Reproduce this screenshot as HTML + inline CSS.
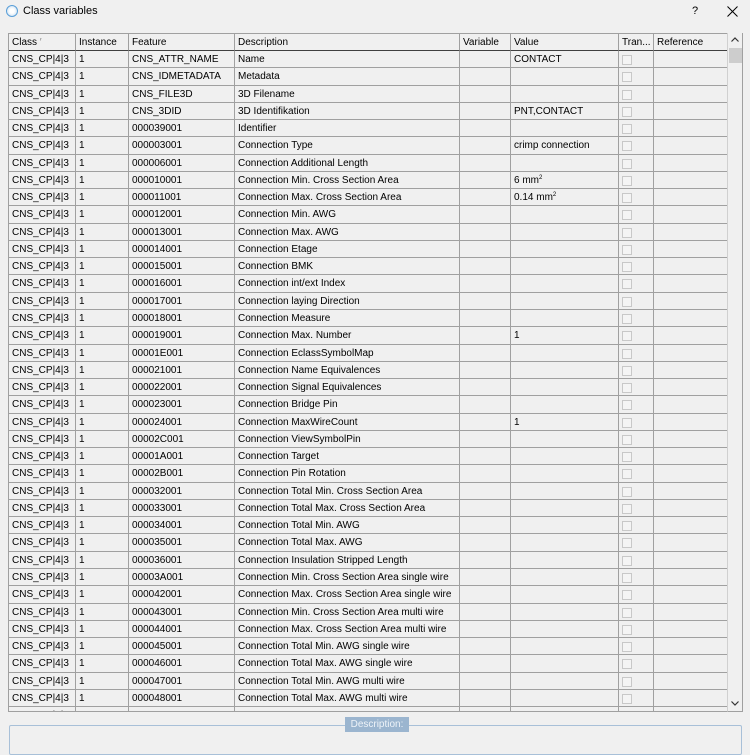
<!DOCTYPE html>
<html><head><meta charset="utf-8"><style>
*{box-sizing:border-box;margin:0;padding:0}
body{width:750px;height:743px;background:#f0f0f0;font-family:"Liberation Sans",sans-serif;font-size:10px;color:#000;position:relative;overflow:hidden}
.title{position:absolute;left:23px;top:5px;font-size:11px}
.ico{position:absolute;left:6px;top:5px;width:12px;height:12px;border-radius:50%;border:1.5px solid #5a9fd8;background:radial-gradient(circle,#fff 30%,#dbe9f5 70%)}
.q{position:absolute;left:692px;top:5px;font-size:11px}
.x{position:absolute;left:727px;top:6px}
.tbl{position:absolute;left:8px;top:33px;width:735px;height:679px;border:1px solid #a0a0a0;border-right:none;overflow:hidden}
.r{display:grid;grid-template-columns:67px 53px 106px 225px 51px 108px 35px 74px;height:17.27px}
.r>div{border-right:1px solid #a0a0a0;border-bottom:1px solid #a0a0a0;padding-left:3px;line-height:18px;white-space:nowrap;overflow:hidden}
.h{height:17px}
.h>div{border-bottom:1px solid #404040;line-height:17px}
.cb{display:inline-block;width:10px;height:10px;border:1px solid #c8c8c8;margin-top:4px;background:#f4f4f4;vertical-align:top}
.sb{position:absolute;left:727px;top:33px;width:16px;height:679px;border-left:1px solid #d0d0d0;background:#f0f0f0;border-right:1px solid #a0a0a0;border-bottom:1px solid #a0a0a0}
.thumb{position:absolute;left:1px;top:15px;width:13px;height:15px;background:#cdcdcd}
.sb .up{position:absolute;top:4px;left:3px}
.sb .dn{position:absolute;bottom:5px;left:3px}
.gb{position:absolute;left:9px;top:725px;width:733px;height:30px;border:1px solid #a8c0d8;border-radius:2px}
.lbl{position:absolute;left:345px;top:717px;width:64px;height:15px;background:#9bb5cf;color:#eef3f8;text-align:center;line-height:15px;font-size:10px}
sup{font-size:6px;position:relative;top:-4px;vertical-align:baseline;line-height:0}
</style></head><body>
<div class="ico"></div><div class="title">Class variables</div>
<div class="q">?</div>
<svg class="x" width="11" height="11" viewBox="0 0 11 11"><path d="M0.5 0.5L10.5 10.5M10.5 0.5L0.5 10.5" stroke="#000" stroke-width="1"/></svg>
<div class="tbl">
<div class="r h"><div>Class <span style="color:#888">′</span></div><div>Instance</div><div>Feature</div><div>Description</div><div>Variable</div><div>Value</div><div>Tran...</div><div>Reference</div></div>
<div class="r"><div>CNS_CP|4|3</div><div>1</div><div>CNS_ATTR_NAME</div><div>Name</div><div></div><div>CONTACT</div><div><span class="cb"></span></div><div></div></div>
<div class="r"><div>CNS_CP|4|3</div><div>1</div><div>CNS_IDMETADATA</div><div>Metadata</div><div></div><div></div><div><span class="cb"></span></div><div></div></div>
<div class="r"><div>CNS_CP|4|3</div><div>1</div><div>CNS_FILE3D</div><div>3D Filename</div><div></div><div></div><div><span class="cb"></span></div><div></div></div>
<div class="r"><div>CNS_CP|4|3</div><div>1</div><div>CNS_3DID</div><div>3D Identifikation</div><div></div><div>PNT,CONTACT</div><div><span class="cb"></span></div><div></div></div>
<div class="r"><div>CNS_CP|4|3</div><div>1</div><div>000039001</div><div>Identifier</div><div></div><div></div><div><span class="cb"></span></div><div></div></div>
<div class="r"><div>CNS_CP|4|3</div><div>1</div><div>000003001</div><div>Connection Type</div><div></div><div>crimp connection</div><div><span class="cb"></span></div><div></div></div>
<div class="r"><div>CNS_CP|4|3</div><div>1</div><div>000006001</div><div>Connection Additional Length</div><div></div><div></div><div><span class="cb"></span></div><div></div></div>
<div class="r"><div>CNS_CP|4|3</div><div>1</div><div>000010001</div><div>Connection Min. Cross Section Area</div><div></div><div>6 mm<sup>2</sup></div><div><span class="cb"></span></div><div></div></div>
<div class="r"><div>CNS_CP|4|3</div><div>1</div><div>000011001</div><div>Connection Max. Cross Section Area</div><div></div><div>0.14 mm<sup>2</sup></div><div><span class="cb"></span></div><div></div></div>
<div class="r"><div>CNS_CP|4|3</div><div>1</div><div>000012001</div><div>Connection Min. AWG</div><div></div><div></div><div><span class="cb"></span></div><div></div></div>
<div class="r"><div>CNS_CP|4|3</div><div>1</div><div>000013001</div><div>Connection Max. AWG</div><div></div><div></div><div><span class="cb"></span></div><div></div></div>
<div class="r"><div>CNS_CP|4|3</div><div>1</div><div>000014001</div><div>Connection Etage</div><div></div><div></div><div><span class="cb"></span></div><div></div></div>
<div class="r"><div>CNS_CP|4|3</div><div>1</div><div>000015001</div><div>Connection BMK</div><div></div><div></div><div><span class="cb"></span></div><div></div></div>
<div class="r"><div>CNS_CP|4|3</div><div>1</div><div>000016001</div><div>Connection int/ext Index</div><div></div><div></div><div><span class="cb"></span></div><div></div></div>
<div class="r"><div>CNS_CP|4|3</div><div>1</div><div>000017001</div><div>Connection laying Direction</div><div></div><div></div><div><span class="cb"></span></div><div></div></div>
<div class="r"><div>CNS_CP|4|3</div><div>1</div><div>000018001</div><div>Connection Measure</div><div></div><div></div><div><span class="cb"></span></div><div></div></div>
<div class="r"><div>CNS_CP|4|3</div><div>1</div><div>000019001</div><div>Connection Max. Number</div><div></div><div>1</div><div><span class="cb"></span></div><div></div></div>
<div class="r"><div>CNS_CP|4|3</div><div>1</div><div>00001E001</div><div>Connection EclassSymbolMap</div><div></div><div></div><div><span class="cb"></span></div><div></div></div>
<div class="r"><div>CNS_CP|4|3</div><div>1</div><div>000021001</div><div>Connection Name Equivalences</div><div></div><div></div><div><span class="cb"></span></div><div></div></div>
<div class="r"><div>CNS_CP|4|3</div><div>1</div><div>000022001</div><div>Connection Signal Equivalences</div><div></div><div></div><div><span class="cb"></span></div><div></div></div>
<div class="r"><div>CNS_CP|4|3</div><div>1</div><div>000023001</div><div>Connection Bridge Pin</div><div></div><div></div><div><span class="cb"></span></div><div></div></div>
<div class="r"><div>CNS_CP|4|3</div><div>1</div><div>000024001</div><div>Connection MaxWireCount</div><div></div><div>1</div><div><span class="cb"></span></div><div></div></div>
<div class="r"><div>CNS_CP|4|3</div><div>1</div><div>00002C001</div><div>Connection ViewSymbolPin</div><div></div><div></div><div><span class="cb"></span></div><div></div></div>
<div class="r"><div>CNS_CP|4|3</div><div>1</div><div>00001A001</div><div>Connection Target</div><div></div><div></div><div><span class="cb"></span></div><div></div></div>
<div class="r"><div>CNS_CP|4|3</div><div>1</div><div>00002B001</div><div>Connection Pin Rotation</div><div></div><div></div><div><span class="cb"></span></div><div></div></div>
<div class="r"><div>CNS_CP|4|3</div><div>1</div><div>000032001</div><div>Connection Total Min. Cross Section Area</div><div></div><div></div><div><span class="cb"></span></div><div></div></div>
<div class="r"><div>CNS_CP|4|3</div><div>1</div><div>000033001</div><div>Connection Total Max. Cross Section Area</div><div></div><div></div><div><span class="cb"></span></div><div></div></div>
<div class="r"><div>CNS_CP|4|3</div><div>1</div><div>000034001</div><div>Connection Total Min. AWG</div><div></div><div></div><div><span class="cb"></span></div><div></div></div>
<div class="r"><div>CNS_CP|4|3</div><div>1</div><div>000035001</div><div>Connection Total Max. AWG</div><div></div><div></div><div><span class="cb"></span></div><div></div></div>
<div class="r"><div>CNS_CP|4|3</div><div>1</div><div>000036001</div><div>Connection Insulation Stripped Length</div><div></div><div></div><div><span class="cb"></span></div><div></div></div>
<div class="r"><div>CNS_CP|4|3</div><div>1</div><div>00003A001</div><div>Connection Min. Cross Section Area single wire</div><div></div><div></div><div><span class="cb"></span></div><div></div></div>
<div class="r"><div>CNS_CP|4|3</div><div>1</div><div>000042001</div><div>Connection Max. Cross Section Area single wire</div><div></div><div></div><div><span class="cb"></span></div><div></div></div>
<div class="r"><div>CNS_CP|4|3</div><div>1</div><div>000043001</div><div>Connection Min. Cross Section Area multi wire</div><div></div><div></div><div><span class="cb"></span></div><div></div></div>
<div class="r"><div>CNS_CP|4|3</div><div>1</div><div>000044001</div><div>Connection Max. Cross Section Area multi wire</div><div></div><div></div><div><span class="cb"></span></div><div></div></div>
<div class="r"><div>CNS_CP|4|3</div><div>1</div><div>000045001</div><div>Connection Total Min. AWG single wire</div><div></div><div></div><div><span class="cb"></span></div><div></div></div>
<div class="r"><div>CNS_CP|4|3</div><div>1</div><div>000046001</div><div>Connection Total Max. AWG single wire</div><div></div><div></div><div><span class="cb"></span></div><div></div></div>
<div class="r"><div>CNS_CP|4|3</div><div>1</div><div>000047001</div><div>Connection Total Min. AWG multi wire</div><div></div><div></div><div><span class="cb"></span></div><div></div></div>
<div class="r"><div>CNS_CP|4|3</div><div>1</div><div>000048001</div><div>Connection Total Max. AWG multi wire</div><div></div><div></div><div><span class="cb"></span></div><div></div></div>
<div class="r"><div>CNS_CP|4|3</div><div>2</div><div>CNS_ATTR_NAME</div><div>Name</div><div></div><div>1</div><div><span class="cb"></span></div><div></div></div>
</div>
<div class="sb">
<svg class="up" width="8" height="5" viewBox="0 0 8 5"><path d="M0.5 4.5L4 1L7.5 4.5" stroke="#333" fill="none" stroke-width="1.2"/></svg>
<div class="thumb"></div>
<svg class="dn" width="8" height="5" viewBox="0 0 8 5"><path d="M0.5 0.5L4 4L7.5 0.5" stroke="#333" fill="none" stroke-width="1.2"/></svg>
</div>
<div class="gb"></div>
<div class="lbl">Description:</div>
</body></html>
